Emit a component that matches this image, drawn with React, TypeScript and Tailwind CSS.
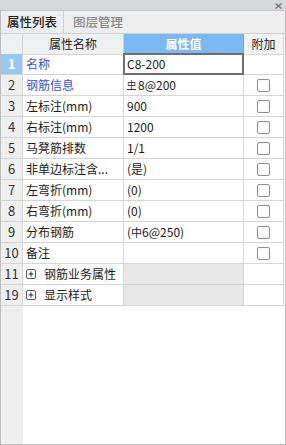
import React from "react";

type Row = {
  idx: string;
  name: React.ReactNode;
  value?: React.ReactNode;
  blue?: boolean;
  check?: boolean;
  group?: boolean;
  active?: boolean;
};

const Rebar = () => (
  <span className="inline-block text-[9px] leading-[9px] border-b border-[#333] mr-[2px] align-[2px]">中</span>
);

const rows: Row[] = [
  { idx: "1", name: "名称", value: "C8-200", blue: true, active: true },
  { idx: "2", name: "钢筋信息", value: (<><Rebar />8@200</>), blue: true, check: true },
  { idx: "3", name: "左标注(mm)", value: "900", check: true },
  { idx: "4", name: "右标注(mm)", value: "1200", check: true },
  { idx: "5", name: "马凳筋排数", value: "1/1", check: true },
  { idx: "6", name: "非单边标注含...", value: "(是)", check: true },
  { idx: "7", name: "左弯折(mm)", value: "(0)", check: true },
  { idx: "8", name: "右弯折(mm)", value: "(0)", check: true },
  { idx: "9", name: "分布钢筋", value: (<>(<span className="text-[11px]">中</span>6@250)</>), check: true },
  { idx: "10", name: "备注", value: "", check: true },
  { idx: "11", name: "钢筋业务属性", group: true },
  { idx: "19", name: "显示样式", group: true },
];

const PlusBox = () => (
  <svg width="10" height="10" viewBox="0 0 10 10" className="shrink-0">
    <rect x="0.5" y="0.5" width="9" height="9" rx="1.5" fill="white" stroke="#555" />
    <path d="M2.5 5h5M5 2.5v5" stroke="#222" strokeWidth="1" />
  </svg>
);

export default function App() {
  return (
    <div
      className="w-[286px] h-[445px] bg-white flex flex-col overflow-hidden"
      style={{ fontFamily: '"Noto Sans CJK SC", "Noto Sans", sans-serif' }}
    >
      <div className="h-[11px] bg-[#d7d8dc] border-b border-[#c4c5c9] flex justify-end items-start pr-[4px] pt-[3px]">
        <svg width="7" height="6" viewBox="0 0 7 6">
          <path d="M0.5 0.5L6.5 5.5M6.5 0.5L0.5 5.5" stroke="#7d7d80" strokeWidth="1.6" />
        </svg>
      </div>
      <div className="h-[22px] bg-[#eeeeee] flex border-l border-r border-[#bdbdbd] text-[12.5px] leading-[22px]">
        <div className="w-[63px] border-r border-[#cfcfcf] text-center text-[#222] font-medium">属性列表</div>
        <div className="w-[68px] text-center text-[#8c8c8c] font-medium">图层管理</div>
      </div>
      <div className="flex-1 relative border-l border-r border-b border-[#bdbdbd] bg-white flex flex-col">
        <div className="grid grid-cols-[22px_101px_120px_40px] h-[21px] text-[12px] leading-[20px] border-t border-[#d0d0d0]">
          <div className="bg-[#eef0f2] border-r border-b border-[#d4d4d4]" />
          <div className="bg-[#eef0f2] border-r border-b border-[#d4d4d4] text-center text-[#222]">属性名称</div>
          <div className="bg-[#7bb8f5] border-r border-b border-[#6aa6e6] text-center text-white font-bold">属性值</div>
          <div className="bg-[#f3f3f3] border-r border-b border-[#d4d4d4] text-center text-[#222]">附加</div>
        </div>
        {rows.map((r) => (
          <div key={r.idx} className="grid grid-cols-[22px_101px_120px_40px] h-[21px] text-[12px] leading-[20px]">
            <div
              className={`border-r border-b border-[#d4d4d4] text-center text-[13px] ${
                r.active ? "bg-[#99c7f3] text-white font-bold" : "bg-[#efefef] text-[#333]"
              }`}
            >
              {r.idx}
            </div>
            <div
              className={`border-r border-b border-[#d4d4d4] pl-[3px] whitespace-nowrap overflow-hidden flex items-center gap-[8px] ${
                r.blue ? "text-[#3352d8]" : "text-[#1a1a1a]"
              }`}
            >
              {r.group && <PlusBox />}
              <span>{r.name}</span>
            </div>
            <div
              className={`relative border-r border-b border-[#d4d4d4] pl-[3px] whitespace-nowrap text-[#1a1a1a] ${
                r.group ? "bg-[#e8e8e8]" : ""
              }`}
            >
              {r.value}
              {r.active && <div className="absolute -left-px -top-px right-[-1px] bottom-[-1px] border-2 border-[#6f6f6f]" />}
            </div>
            <div className="border-r border-b border-[#d4d4d4] flex items-center justify-center">
              {r.check && (
                <div className="w-[13px] h-[13px] border border-[#8c8c8c] rounded-[2px] bg-white" />
              )}
            </div>
          </div>
        ))}
        <div className="flex-1 flex">
          <div className="w-[22px] bg-[#efefef]" />
        </div>
      </div>
    </div>
  );
}
